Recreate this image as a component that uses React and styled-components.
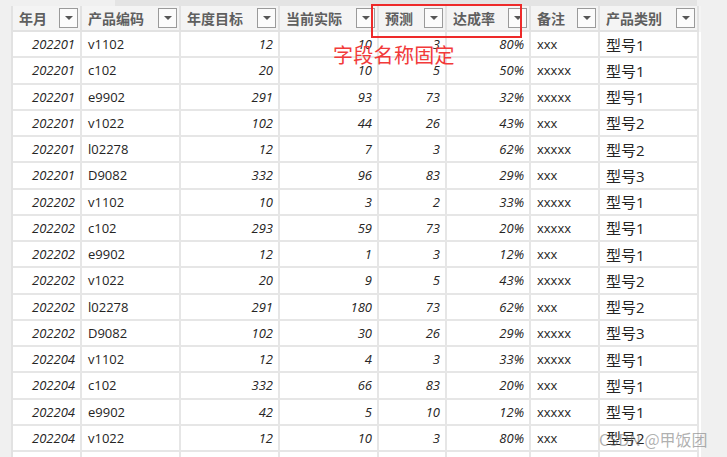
import React from "react";
import styled, { createGlobalStyle } from "styled-components";

const Global = createGlobalStyle`
  html, body { margin: 0; padding: 0; background: #f0f0f0; }
  #root { width: 727px; height: 457px; overflow: hidden; }
`;

const COLS = [69, 99, 99, 99, 68, 84, 69, 99];

const Page = styled.div`
  position: relative;
  width: 727px;
  height: 457px;
  overflow: hidden;
  background: #f0f0f0;
  font-family: "Open Sans", "Noto Sans CJK SC", sans-serif;
`;

const TopBar = styled.div`
  height: 6px;
  display: flex;
  padding-left: 115px;
`;

const Thumb = styled.div`
  width: 582px;
  background: #e4e4e4;
`;

const Table = styled.div`
  margin-left: 11px;
  width: 688px;
  border-left: 2px solid #e2e2e2;
  background: #fff;
`;

const Row = styled.div`
  display: grid;
  grid-template-columns: ${COLS.map((c) => c + "px").join(" ")};
  height: ${(p) => (p.$head ? "26px" : "26.25px")};
  background: ${(p) => (p.$head ? "#f4f4f4" : "#fff")};
`;

const HeadCell = styled.div`
  box-sizing: border-box;
  border-right: 2px solid #e2e2e2;
  border-bottom: 2px solid #e2e2e2;
  display: flex;
  align-items: center;
  justify-content: space-between;
  padding: 0 2px 0 6px;
  font-family: "Noto Sans CJK SC", sans-serif;
  font-weight: 700;
  font-size: 14px;
  color: #5f5f5f;
`;

const Drop = styled.div`
  box-sizing: border-box;
  width: 19px;
  height: 20px;
  border: 1px solid #9a9a9a;
  background: #fbfbfb;
  display: flex;
  align-items: center;
  justify-content: center;
  &::after {
    content: "";
    width: 0;
    height: 0;
    border-left: 4px solid transparent;
    border-right: 4px solid transparent;
    border-top: 4px solid #555;
  }
`;

const Cell = styled.div`
  box-sizing: border-box;
  border-right: 2px solid #e6e6e6;
  border-bottom: 2px solid #e6e6e6;
  display: flex;
  align-items: center;
  justify-content: ${(p) => (p.$num ? "flex-end" : "flex-start")};
  padding: ${(p) => (p.$num ? "0 5px 0 0" : "0 0 0 6px")};
  font-style: ${(p) => (p.$num ? "italic" : "normal")};
  font-size: ${(p) => (p.$cjk ? "15px" : "13px")};
  color: #252423;
  white-space: nowrap;
  overflow: hidden;
`;

const RedBox = styled.div`
  position: absolute;
  left: 371px;
  top: 4px;
  width: 151px;
  height: 34px;
  box-sizing: border-box;
  border: 2px solid #ee2a2a;
`;

const Note = styled.div`
  position: absolute;
  left: 333px;
  top: 40px;
  font-family: "Noto Sans CJK SC", sans-serif;
  font-size: 20px;
  color: #f23a3a;
  letter-spacing: 0.3px;
`;

const Mark = styled.div`
  position: absolute;
  left: 599px;
  top: 427px;
  font-family: "Noto Sans CJK SC", sans-serif;
  font-size: 16px;
  color: rgba(110, 110, 110, 0.55);
  white-space: nowrap;
`;

const heads = ["年月", "产品编码", "年度目标", "当前实际", "预测", "达成率", "备注", "产品类别"];

const data = [
  ["202201", "v1102", 12, 10, 3, "80%", "xxx", "型号1"],
  ["202201", "c102", 20, 10, 5, "50%", "xxxxx", "型号1"],
  ["202201", "e9902", 291, 93, 73, "32%", "xxxxx", "型号1"],
  ["202201", "v1022", 102, 44, 26, "43%", "xxx", "型号2"],
  ["202201", "l02278", 12, 7, 3, "62%", "xxxxx", "型号2"],
  ["202201", "D9082", 332, 96, 83, "29%", "xxx", "型号3"],
  ["202202", "v1102", 10, 3, 2, "33%", "xxxxx", "型号1"],
  ["202202", "c102", 293, 59, 73, "20%", "xxxxx", "型号1"],
  ["202202", "e9902", 12, 1, 3, "12%", "xxx", "型号1"],
  ["202202", "v1022", 20, 9, 5, "43%", "xxxxx", "型号2"],
  ["202202", "l02278", 291, 180, 73, "62%", "xxx", "型号2"],
  ["202202", "D9082", 102, 30, 26, "29%", "xxxxx", "型号3"],
  ["202204", "v1102", 12, 4, 3, "33%", "xxxxx", "型号1"],
  ["202204", "c102", 332, 66, 83, "20%", "xxx", "型号1"],
  ["202204", "e9902", 42, 5, 10, "12%", "xxxxx", "型号1"],
  ["202204", "v1022", 12, 10, 3, "80%", "xxx", "型号2"],
  ["", "", "", "", "", "", "", ""],
];

const numCols = [true, false, true, true, true, true, false, false];

export default function App() {
  return (
    <Page>
      <Global />
      <TopBar>
        <Thumb />
      </TopBar>
      <Table>
        <Row $head>
          {heads.map((h) => (
            <HeadCell key={h}>
              <span>{h}</span>
              <Drop />
            </HeadCell>
          ))}
        </Row>
        {data.map((r, i) => (
          <Row key={i}>
            {r.map((v, j) => (
              <Cell key={j} $num={numCols[j]} $cjk={j === 7}>
                {v}
              </Cell>
            ))}
          </Row>
        ))}
      </Table>
      <RedBox />
      <Note>字段名称固定</Note>
      <Mark>CSDN @甲饭团</Mark>
    </Page>
  );
}
